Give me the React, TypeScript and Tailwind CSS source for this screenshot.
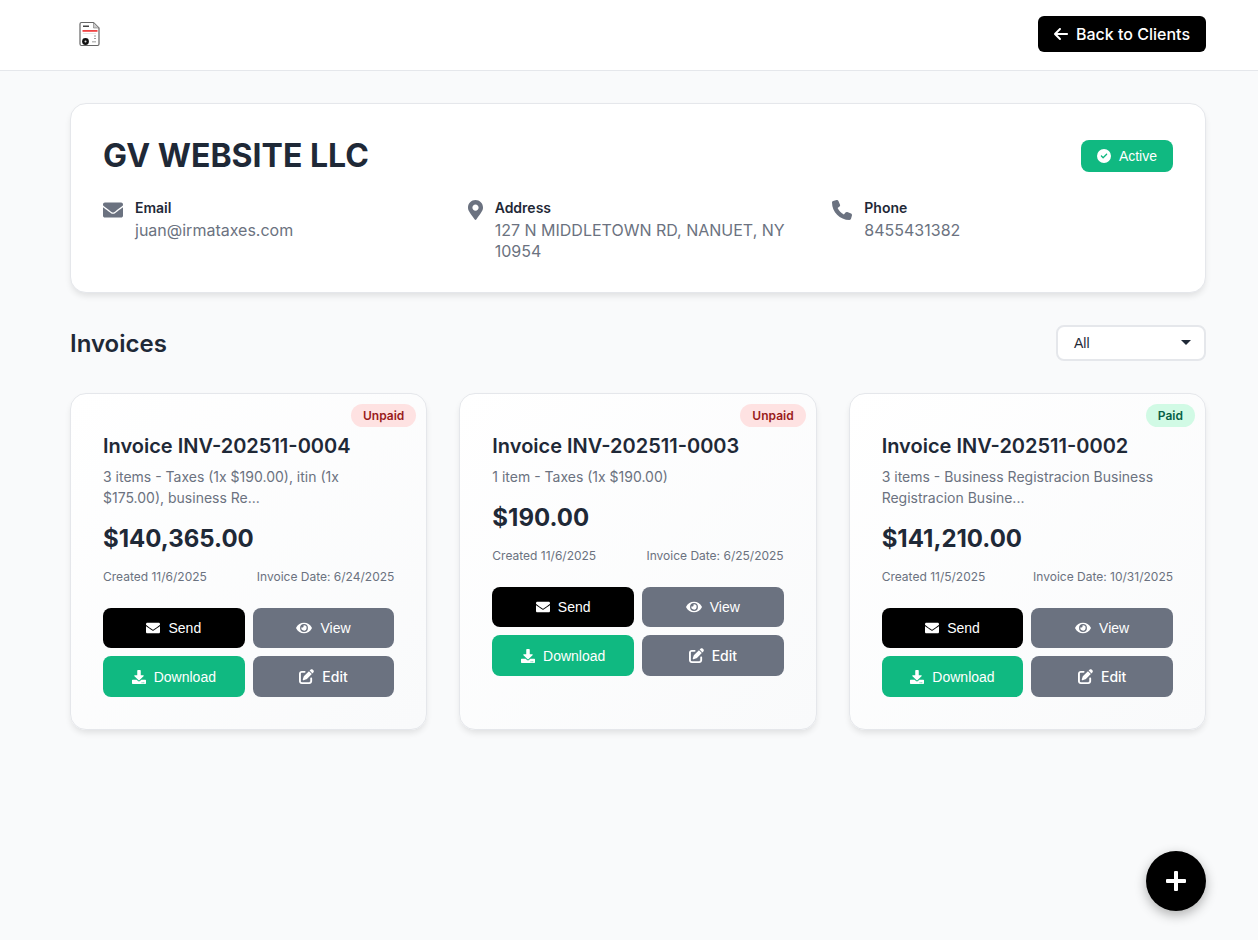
import React from 'react';
import { FaDownload, FaEnvelope, FaEye, FaMapMarkerAlt } from 'react-icons/fa';
import { FaArrowLeft, FaCircleCheck, FaPenToSquare, FaPhone } from 'react-icons/fa6';

interface Invoice {
  number: string;
  summary: React.ReactNode;
  total: string;
  created: string;
  invoiceDate: string;
  paid: boolean;
}

const invoices: Invoice[] = [
  {
    number: 'INV-202511-0004',
    summary: '3 items - Taxes (1x $190.00), itin (1x $175.00), business Re...',
    total: '$140,365.00',
    created: '11/6/2025',
    invoiceDate: '6/24/2025',
    paid: false,
  },
  {
    number: 'INV-202511-0003',
    summary: '1 item - Taxes (1x $190.00)',
    total: '$190.00',
    created: '11/6/2025',
    invoiceDate: '6/25/2025',
    paid: false,
  },
  {
    number: 'INV-202511-0002',
    summary: '3 items - Business Registracion Business Registracion Busine...',
    total: '$141,210.00',
    created: '11/5/2025',
    invoiceDate: '10/31/2025',
    paid: true,
  },
];

// small invoice document logo
const Logo = () => (
  <svg width="22" height="26" viewBox="0 0 22 26" className="block">
    <path d="M2.5 1.5h12l5.5 5.5v16a1.5 1.5 0 0 1-1.5 1.5h-16A1.5 1.5 0 0 1 1 23V3a1.5 1.5 0 0 1 1.5-1.5z" fill="#fff" stroke="#666" strokeWidth="1.2" />
    <path d="M14.5 1.5v5.5h5.5z" fill="#ccc" stroke="#777" strokeWidth="0.6" />
    <rect x="4" y="4.5" width="6" height="1.5" fill="#444" />
    <rect x="3.5" y="9" width="15" height="1.8" fill="#ef4444" />
    <rect x="4" y="12" width="13" height="1" fill="#e5e5e5" />
    <rect x="15" y="14.5" width="2" height="1" fill="#999" />
    <rect x="15" y="17" width="2" height="1" fill="#999" />
    <rect x="13" y="20" width="4" height="1.5" fill="#bbb" />
    <circle cx="6.5" cy="20.5" r="3.4" fill="#111" />
    <circle cx="6.5" cy="20.5" r="1" fill="#ddd" />
  </svg>
);

const InfoItem = ({ icon, label, value }: { icon: React.ReactNode; label: string; value: string }) => (
  <div className="flex items-start gap-3">
    <div className="text-[#6b7280] mt-[3px]">{icon}</div>
    <div>
      <div className="text-[14px] leading-[21px] font-semibold text-[#1f2937] mb-[2px]">{label}</div>
      <div className="text-[16px] leading-[20.6px] text-[#6b7280]">{value}</div>
    </div>
  </div>
);

const ActionButton = ({ icon, label, className }: { icon: React.ReactNode; label: string; className: string }) => (
  <button className={`flex items-center justify-center gap-2 h-[40.4px] rounded-lg text-white text-[14px] ${className}`}>
    {icon}
    <span>{label}</span>
  </button>
);

const InvoiceCard = ({ invoice }: { invoice: Invoice }) => (
  <div className="relative rounded-2xl border border-[#e5e7eb] bg-gradient-to-br from-white to-[#f9fafb] p-8 shadow-[0_4px_6px_-1px_rgba(0,0,0,0.1)]">
    <span
      className={`absolute top-[10px] right-[10px] h-[23px] px-3 rounded-full flex items-center text-[12px] font-semibold ${
        invoice.paid ? 'bg-[#d1fae5] text-[#065f46]' : 'bg-[#fee2e2] text-[#991b1b]'
      }`}
    >
      {invoice.paid ? 'Paid' : 'Unpaid'}
    </span>
    <h3 className="mt-2 text-[20px] leading-[24px] font-semibold text-[#1f2937] mb-2">Invoice {invoice.number}</h3>
    <p className="text-[14px] leading-[21px] text-[#6b7280] mb-4">{invoice.summary}</p>
    <div className="text-[24px] leading-[29px] font-bold text-[#1f2937] mb-[15px]">{invoice.total}</div>
    <div className="flex justify-between text-[12px] leading-[18px] text-[#6b7280] mb-[22px]">
      <span>Created {invoice.created}</span>
      <span>Invoice Date: {invoice.invoiceDate}</span>
    </div>
    <div className="grid grid-cols-2 gap-2">
      <ActionButton icon={<FaEnvelope className="h-[14px] w-[14px]" />} label="Send" className="bg-black font-['Liberation_Sans',sans-serif]" />
      <ActionButton icon={<FaEye className="h-[14px] w-4" />} label="View" className="bg-[#6b7280] font-['Liberation_Sans',sans-serif]" />
      <ActionButton icon={<FaDownload className="h-[14px] w-[14px]" />} label="Download" className="bg-[#10b981] pt-px font-['Liberation_Sans',sans-serif]" />
      <ActionButton icon={<FaPenToSquare className="h-[15px] w-[15px]" />} label="Edit" className="bg-[#6b7280] font-medium" />
    </div>
  </div>
);

export default function App() {
  return (
    <div className="min-h-[940px] bg-[#f9fafb] font-['Inter',sans-serif] text-[#1f2937]">
      {/* header */}
      <header className="h-[71px] bg-white border-b border-[#e5e7eb] flex items-start justify-between pl-[79px] pr-[52px] pt-4">
        <div className="pt-[5px]">
          <Logo />
        </div>
        <button className="flex items-center gap-2 h-9 px-4 rounded-md bg-black text-white text-[16px] font-medium">
          <FaArrowLeft className="h-4 w-4 -mx-px" />
          Back to Clients
        </button>
      </header>

      <main className="pl-[70px] pr-[52px] pt-8">
        {/* client card */}
        <section className="h-[190px] rounded-2xl border border-[#e5e7eb] bg-white p-8 shadow-[0_4px_6px_-1px_rgba(0,0,0,0.1)]">
          <div className="flex items-start justify-between mb-[21px]">
            <h1 className="text-[32px] leading-[40px] font-bold text-[#1f2937]">GV WEBSITE LLC</h1>
            <span className="mt-1 flex items-center gap-2 h-8 px-4 rounded-lg bg-[#10b981] text-white text-[14px] font-['Liberation_Sans',sans-serif]">
              <FaCircleCheck className="h-[14px] w-[14px]" />
              Active
            </span>
          </div>
          <div className="grid grid-cols-3 gap-6">
            <InfoItem icon={<FaEnvelope className="h-5 w-5" />} label="Email" value="juan@irmataxes.com" />
            <InfoItem icon={<FaMapMarkerAlt className="h-5 w-[15px]" />} label="Address" value="127 N MIDDLETOWN RD, NANUET, NY 10954" />
            <InfoItem icon={<FaPhone className="h-5 w-5" />} label="Phone" value="8455431382" />
          </div>
        </section>

        {/* invoices heading */}
        <div className="flex items-center justify-between mt-8 mb-8">
          <h2 className="h-9 text-[24px] leading-[38px] font-semibold text-[#1f2937]">Invoices</h2>
          <div className="relative w-[150px] h-9 rounded-lg border-2 border-[#e5e7eb] bg-white flex items-center pl-4 text-[14px] font-['Liberation_Sans',sans-serif]">
            All
            <span className="absolute right-[13px] top-[13px] w-0 h-0 border-x-[5px] border-x-transparent border-t-[5px] border-t-[#1f2937]" />
          </div>
        </div>

        <div className="grid grid-cols-3 gap-8">
          {invoices.map((invoice) => (
            <InvoiceCard key={invoice.number} invoice={invoice} />
          ))}
        </div>
      </main>

      {/* add invoice */}
      <button className="fixed right-[52px] bottom-[29px] w-[60px] h-[60px] rounded-full bg-black text-white flex items-center justify-center shadow-[0_4px_12px_rgba(0,0,0,0.3)]">
        <svg width="20" height="20" viewBox="0 0 20 20" fill="currentColor">
          <rect x="0" y="8" width="20" height="4" rx="1" />
          <rect x="8" y="0" width="4" height="20" rx="1" />
        </svg>
      </button>
    </div>
  );
}
